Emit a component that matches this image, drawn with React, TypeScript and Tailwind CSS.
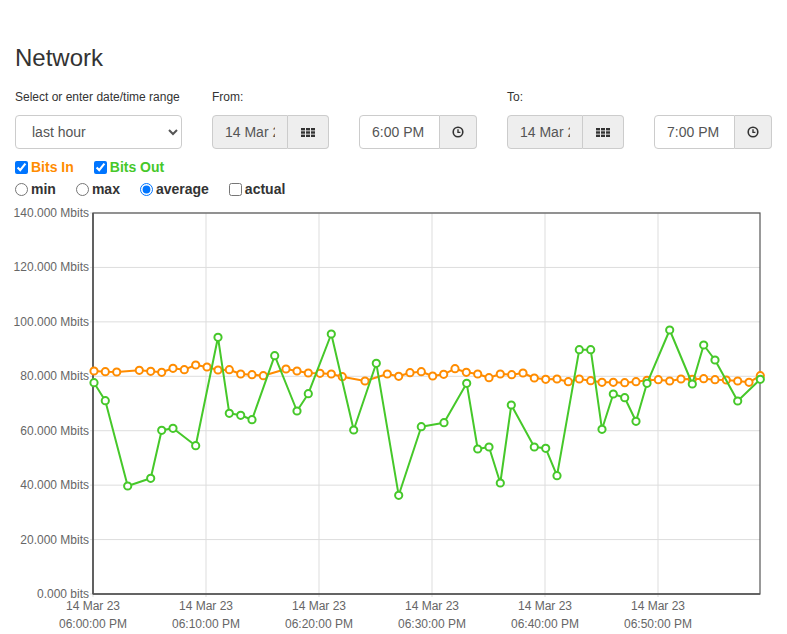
import React from "react"

// chart points, in page pixel coordinates
const bitsIn: [number, number][] = [
  [94, 371], [105.3, 371.7], [116.7, 372], [139.3, 370.3], [150.7, 371.3], [161.7, 372.3], [173, 368.3],
  [184.3, 369.7], [195.7, 365], [207, 367], [218, 370], [229.3, 369.7], [240.7, 374], [252, 374.7],
  [263.3, 375.7], [286, 369], [297, 371], [308.3, 373], [320, 373.3], [331.3, 374], [342.3, 376.7],
  [365, 381], [387.3, 374], [398.7, 376.3], [410, 372.7], [421.3, 371.7], [432.7, 376], [443.7, 374.3],
  [455, 368.7], [466.3, 372.3], [477.7, 374], [489, 377.7], [500.3, 374], [511.7, 374.7], [523, 373],
  [534.3, 378], [545.7, 379.3], [557, 379], [568.3, 381.7], [579.3, 379], [590.7, 380.7], [602, 382.3],
  [613.3, 382.3], [624.7, 382.7], [636, 381.7], [647, 380.3], [658.3, 379.7], [669.7, 381], [681, 379],
  [692.3, 379.3], [703.7, 378.7], [715, 379.7], [726.3, 380], [737.7, 381], [749, 382.3], [760.3, 375.7],
]

const bitsOut: [number, number][] = [
  [94, 382.7], [105.3, 400.7], [127.7, 486], [150.7, 478.3], [161.7, 430.3], [173, 428.3], [195.7, 445.7],
  [218, 337.3], [229.3, 413.3], [240.7, 415.3], [252, 419.7], [274.7, 355.7], [297, 411], [308.3, 393.7],
  [331.3, 334], [353.7, 430], [376.3, 363.3], [398.7, 495.3], [421.3, 426.7], [444, 422.7], [466.7, 383.3],
  [477.7, 449], [489, 447], [500.3, 483], [511.3, 405], [534.3, 447], [545.7, 448.3], [557, 475.7],
  [579.3, 349.7], [590.7, 349.7], [602, 429.3], [613.3, 394], [624.7, 397.7], [636, 421.3], [647, 383.3],
  [669.7, 330], [692.3, 384], [703.7, 345], [715, 360], [737.7, 401], [760.3, 379.3],
]

const yLabels = [
  "0.000 bits", "20.000 Mbits", "40.000 Mbits", "60.000 Mbits",
  "80.000 Mbits", "100.000 Mbits", "120.000 Mbits", "140.000 Mbits",
]
const xTimes = ["06:00:00 PM", "06:10:00 PM", "06:20:00 PM", "06:30:00 PM", "06:40:00 PM", "06:50:00 PM"]

const ORANGE = "#ff8c00"
const GREEN = "#46c82a"

function GridIcon() {
  return (
    <svg width="14" height="9" viewBox="0 0 14 9" fill="#333">
      {[0, 5, 10].map((x) =>
        [0, 3.3, 6.6].map((y) => <rect key={`${x}-${y}`} x={x} y={y} width="4" height="2.4" />)
      )}
    </svg>
  )
}

function ClockIcon() {
  return (
    <svg width="12" height="12" viewBox="0 0 12 12" fill="none" stroke="#333">
      <circle cx="6" cy="6" r="4.8" strokeWidth="1.6" />
      <path d="M6 3.2V6.4H8.4" strokeWidth="1.4" />
    </svg>
  )
}

function DateGroup() {
  return (
    <div className="flex h-[34px]">
      <input
        readOnly
        value="14 Mar 2023"
        className="w-[76px] h-[34px] px-[12px] border border-[#ccc] rounded-l-[4px] bg-[#eee] text-[14px] text-[#555] outline-none"
      />
      <div className="w-[41px] h-[34px] flex items-center justify-center border border-l-0 border-[#ccc] rounded-r-[4px] bg-[#eee]">
        <GridIcon />
      </div>
    </div>
  )
}

function TimeGroup({ value }: { value: string }) {
  return (
    <div className="flex h-[34px]">
      <input
        readOnly
        value={value}
        className="w-[81px] h-[34px] px-[12px] border border-[#ccc] rounded-l-[4px] bg-white text-[14px] text-[#555] outline-none"
      />
      <div className="w-[37px] h-[34px] flex items-center justify-center border border-l-0 border-[#ccc] rounded-r-[4px] bg-[#eee]">
        <ClockIcon />
      </div>
    </div>
  )
}

function Series({ pts, color }: { pts: [number, number][]; color: string }) {
  return (
    <g>
      <polyline
        points={pts.map(([x, y]) => `${x},${y}`).join(" ")}
        fill="none"
        stroke={color}
        strokeWidth="2"
        strokeLinejoin="round"
      />
      {pts.map(([x, y], i) => (
        <circle key={i} cx={x} cy={y} r="3.6" fill="#fff" stroke={color} strokeWidth="2" />
      ))}
    </g>
  )
}

function Chart() {
  const top = 213
  const bottom = 594
  const left = 93
  const right = 760
  const step = (bottom - top) / 7
  return (
    <svg width="787" height="434" viewBox="0 200 787 434" className="block">
      {yLabels.map((_, i) => {
        const y = bottom - i * step
        return <line key={i} x1={left - 3} x2={right} y1={y} y2={y} stroke="#ddd" strokeWidth="1" />
      })}
      {xTimes.map((_, i) => {
        const x = left + i * 113
        return <line key={i} x1={x} x2={x} y1={top} y2={bottom + 3} stroke="#ddd" strokeWidth="1" />
      })}
      <rect x={left} y={top} width={right - left} height={bottom - top} fill="none" stroke="#555" strokeWidth="1.2" />
      <line x1={left} x2={left} y1={top} y2={bottom} stroke="#555" strokeWidth="1.6" />
      <line x1={left} x2={right} y1={bottom} y2={bottom} stroke="#555" strokeWidth="1.6" />
      {yLabels.map((t, i) => (
        <text key={t} x={89} y={bottom - i * step + 4} textAnchor="end" fontSize="12" fill="#666">
          {t}
        </text>
      ))}
      {xTimes.map((t, i) => (
        <g key={t}>
          <text x={left + i * 113} y={610} textAnchor="middle" fontSize="12" fill="#666">
            14 Mar 23
          </text>
          <text x={left + i * 113} y={628} textAnchor="middle" fontSize="12" fill="#666">
            {t}
          </text>
        </g>
      ))}
      <Series pts={bitsIn} color={ORANGE} />
      <Series pts={bitsOut} color={GREEN} />
    </svg>
  )
}

export default function App() {
  return (
    <div className="w-[787px] h-[634px] overflow-hidden bg-white text-[#333] font-['Liberation_Sans',Arial,sans-serif]">
      <div className="px-[15px] pt-[45px]">
        <h1 className="text-[24px] leading-[26px] font-normal">Network</h1>

        <div className="mt-[18px] flex gap-[30px]">
          <div className="flex flex-col w-[167px]">
            <label className="text-[12px] leading-[17px] h-[17px]">Select or enter date/time range</label>
            <select
              defaultValue="hour"
              className="mt-[9px] h-[34px] w-[167px] px-[12px] border border-[#ccc] rounded-[4px] bg-white text-[14px] text-[#555]"
            >
              <option value="hour">last hour</option>
              <option value="day">last day</option>
              <option value="week">last week</option>
            </select>
          </div>

          <div className="flex flex-col">
            <label className="text-[12px] leading-[17px] h-[17px]">From:</label>
            <div className="mt-[9px] flex gap-[30px]">
              <DateGroup />
              <TimeGroup value="6:00 PM" />
            </div>
          </div>

          <div className="flex flex-col">
            <label className="text-[12px] leading-[17px] h-[17px]">To:</label>
            <div className="mt-[9px] flex gap-[30px]">
              <DateGroup />
              <TimeGroup value="7:00 PM" />
            </div>
          </div>
        </div>

        <div className="mt-[7px] flex h-[22px] items-center gap-[20px] text-[14px] font-bold">
          <label className="flex items-center gap-[3px]" style={{ color: ORANGE }}>
            <input type="checkbox" defaultChecked className="m-0 w-[13px] h-[13px]" />
            Bits In
          </label>
          <label className="flex items-center gap-[3px]" style={{ color: GREEN }}>
            <input type="checkbox" defaultChecked className="m-0 w-[13px] h-[13px]" />
            Bits Out
          </label>
        </div>

        <div className="flex h-[22px] items-center gap-[20px] text-[14px] font-bold">
          <label className="flex items-center gap-[3px]">
            <input type="radio" name="agg" className="m-0 w-[13px] h-[13px]" />
            min
          </label>
          <label className="flex items-center gap-[3px]">
            <input type="radio" name="agg" className="m-0 w-[13px] h-[13px]" />
            max
          </label>
          <label className="flex items-center gap-[3px]">
            <input type="radio" name="agg" defaultChecked className="m-0 w-[13px] h-[13px]" />
            average
          </label>
          <label className="flex items-center gap-[3px]">
            <input type="checkbox" className="m-0 w-[13px] h-[13px]" />
            actual
          </label>
        </div>
      </div>

      <Chart />
    </div>
  )
}
